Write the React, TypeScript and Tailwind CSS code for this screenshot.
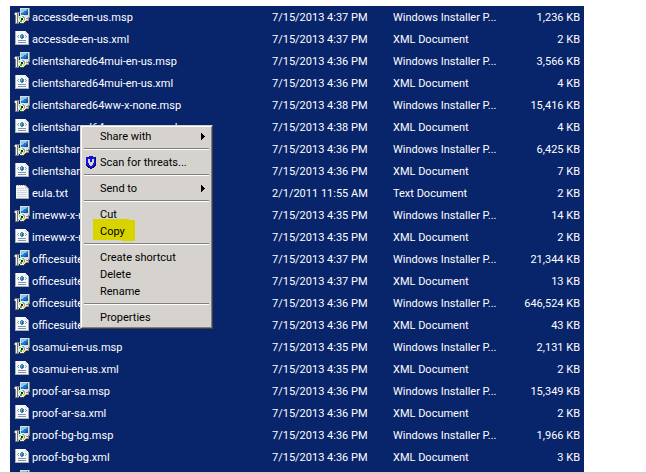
import React from "react";

type FileKind = "msp" | "xml" | "txt";

interface FileRow {
  name: string;
  date: string;
  size: string;
  kind: FileKind;
}

const TYPE_LABEL: Record<FileKind, string> = {
  msp: "Windows Installer P...",
  xml: "XML Document",
  txt: "Text Document",
};

const files: FileRow[] = [
  { name: "accessde-en-us.msp", date: "7/15/2013 4:37 PM", size: "1,236 KB", kind: "msp" },
  { name: "accessde-en-us.xml", date: "7/15/2013 4:37 PM", size: "2 KB", kind: "xml" },
  { name: "clientshared64mui-en-us.msp", date: "7/15/2013 4:36 PM", size: "3,566 KB", kind: "msp" },
  { name: "clientshared64mui-en-us.xml", date: "7/15/2013 4:36 PM", size: "4 KB", kind: "xml" },
  { name: "clientshared64ww-x-none.msp", date: "7/15/2013 4:38 PM", size: "15,416 KB", kind: "msp" },
  { name: "clientshared64ww-x-none.xml", date: "7/15/2013 4:38 PM", size: "4 KB", kind: "xml" },
  { name: "clientsharedmui-en-us.msp", date: "7/15/2013 4:36 PM", size: "6,425 KB", kind: "msp" },
  { name: "clientsharedmui-en-us.xml", date: "7/15/2013 4:36 PM", size: "7 KB", kind: "xml" },
  { name: "eula.txt", date: "2/1/2011 11:55 AM", size: "2 KB", kind: "txt" },
  { name: "imeww-x-none.msp", date: "7/15/2013 4:35 PM", size: "14 KB", kind: "msp" },
  { name: "imeww-x-none.xml", date: "7/15/2013 4:35 PM", size: "2 KB", kind: "xml" },
  { name: "officesuitemui-en-us.msp", date: "7/15/2013 4:37 PM", size: "21,344 KB", kind: "msp" },
  { name: "officesuitemui-en-us.xml", date: "7/15/2013 4:37 PM", size: "13 KB", kind: "xml" },
  { name: "officesuiteww-x-none.msp", date: "7/15/2013 4:36 PM", size: "646,524 KB", kind: "msp" },
  { name: "officesuiteww-x-none.xml", date: "7/15/2013 4:36 PM", size: "43 KB", kind: "xml" },
  { name: "osamui-en-us.msp", date: "7/15/2013 4:35 PM", size: "2,131 KB", kind: "msp" },
  { name: "osamui-en-us.xml", date: "7/15/2013 4:35 PM", size: "2 KB", kind: "xml" },
  { name: "proof-ar-sa.msp", date: "7/15/2013 4:36 PM", size: "15,349 KB", kind: "msp" },
  { name: "proof-ar-sa.xml", date: "7/15/2013 4:36 PM", size: "2 KB", kind: "xml" },
  { name: "proof-bg-bg.msp", date: "7/15/2013 4:36 PM", size: "1,966 KB", kind: "msp" },
  { name: "proof-bg-bg.xml", date: "7/15/2013 4:36 PM", size: "3 KB", kind: "xml" },
];

const InstallerIcon = () => (
  <svg viewBox="0 0 16 16" className="block w-4 h-4 shrink-0" shapeRendering="crispEdges" aria-hidden="true">
    {/* Monitor and base */}
    <path d="M6 0h10v10h-1v3h-4V9H6z" fill="#8b8c88" />
    <path d="M6 0h9v9H6z" fill="#dcdcd4" />
    <path d="M7 1h7v6H7z" fill="#1f78cc" />
    <path d="M7 1h6v1h-1v1h-2v1H9v1H7z" fill="#7fcbf5" />
    <path d="M12 4h2v3h-4V6h2z" fill="#0c55ad" />
    <path d="M11 9h3v1h-3zM11 11h3v1h-3z" fill="#e4e4dc" />
    {/* Box */}
    <path d="M0 5h1V4h5v1H5v11H1V7H0z" fill="#77787a" />
    <path d="M1 5h2v2H1zM2 7h1v8H2z" fill="#f4f4ee" />
    <path d="M4 5h1v10H4z" fill="#c7c8c2" />
    {/* Disc */}
    <path d="M7 7h3v1h1v1h1v4h-1v1h-1v1H6v-1H5v-1H4V9h1V8h2z" fill="#f0f2ee" />
    <path d="M8 8h2v1h1v1H9V9H8z" fill="#3fc6cf" />
    <path d="M5 9h2v1H6v1H5z" fill="#9bdd3c" />
    <path d="M9 12h2v1h-1v1H9z" fill="#f4d022" />
    <path d="M6 12h2v2H6z" fill="#2fae48" />
    <path d="M10 10h1v2h-1z" fill="#ef7a4c" />
    <path d="M7 10h2v2H7z" fill="#152a35" />
    <path d="M6 15h4v1H6zM10 14h1v1h-1zM11 13h1v1h-1z" fill="#3d4345" />
  </svg>
);

const XmlIcon = () => (
  <svg viewBox="0 0 16 16" className="block w-4 h-4 shrink-0" shapeRendering="crispEdges" aria-hidden="true">
    <path d="M1 1h11v1h1v1h1v1h1v11H1z" fill="#a9b0b8" />
    <path d="M2 1h9v3h3v10H2z" fill="#f7f9fb" />
    <path d="M11 1h1v1h1v1h1v1h-3z" fill="#dfe3e8" />
    <path d="M3 6h1v1H3zM4 5h1v1H4zM4 7h1v1H4zM12 6h1v1h-1zM11 5h1v1h-1zM11 7h1v1h-1z" fill="#93a0ac" />
    <path d="M7 4h2v1h1v3H9v1H7V8H6V5h1z" fill="#3c8bc0" />
    <path d="M7 5h1v2H7z" fill="#5db98c" />
    <path d="M8 6h1v2H8z" fill="#215d9c" />
    <path d="M4 10h8v1H4zM4 12h8v1H4z" fill="#8594aa" />
  </svg>
);

const TextIcon = () => (
  <svg viewBox="0 0 16 16" className="block w-4 h-4 shrink-0" shapeRendering="crispEdges" aria-hidden="true">
    <path d="M2 1h10v1h1v1h1v1h1v11H2z" fill="#a4a7ad" />
    <path d="M2 2h9v3h3v9H2z" fill="#f8f8f4" />
    <path d="M3 1h1v1H3zM5 1h1v1H5zM7 1h1v1H7zM9 1h1v1H9z" fill="#f8f8f4" />
    <path d="M11 2h1v1h1v1h1v1h-3z" fill="#d9dce0" />
    <path d="M3 4h7v1H3zM3 6h10v1H3zM3 8h10v1H3zM3 10h10v1H3zM3 12h10v1H3z" fill="#ccd5e2" />
  </svg>
);

const ICONS: Record<FileKind, React.FC> = {
  msp: InstallerIcon,
  xml: XmlIcon,
  txt: TextIcon,
};

const ShieldIcon = () => (
  <svg viewBox="0 0 10 13" className="w-[10px] h-[13px]" shapeRendering="crispEdges" aria-hidden="true">
    <path d="M0 1h3V0h4v1h3v9H9v1H8v1H6v1H4v-1H2v-1H1v-1H0z" fill="#0a0a6e" />
    <path d="M0 1h3V0h3v1h3v8H8v1H7v1H6v1H4v-1H3v-1H1V9H0z" fill="#1010e0" />
    <path d="M2 3h2v3h2V3h2v4H7v2H6v1H4V9H3V7H2z" fill="#d6d3ce" />
  </svg>
);

const ArrowIcon = () => (
  <svg viewBox="0 0 4 7" className="w-1 h-[7px]" shapeRendering="crispEdges" aria-hidden="true">
    <path d="M0 0h1v1h1v1h1v1h1v1H3v1H2v1H1v1H0z" fill="#000" />
  </svg>
);

// Marker stroke behind the Copy entry
const Highlight = () => (
  <svg
    viewBox="0 0 42 22"
    className="absolute -left-[7px] -top-[5px] -z-10 w-[42px] h-[22px]"
    shapeRendering="crispEdges"
    aria-hidden="true"
  >
    <path d="M0 0h36v1h6v21H28v-1H0z" fill="#d8d400" />
  </svg>
);

interface MenuItem {
  label: string;
  submenu?: boolean;
  shield?: boolean;
  marked?: boolean;
}

const menuGroups: MenuItem[][] = [
  [{ label: "Share with", submenu: true }],
  [{ label: "Scan for threats...", shield: true }],
  [{ label: "Send to", submenu: true }],
  [{ label: "Cut" }, { label: "Copy", marked: true }],
  [{ label: "Create shortcut" }, { label: "Delete" }, { label: "Rename" }],
  [{ label: "Properties" }],
];

const ContextMenu = () => (
  <div
    role="menu"
    className="absolute left-[80px] top-[125px] isolate w-[133px] border border-t-[#d6d3ce] border-l-[#d6d3ce] border-r-[#404040] border-b-[#404040] bg-[#d6d3ce] text-black"
  >
    <div className="border border-t-white border-l-white border-r-[#808080] border-b-[#808080] p-px">
      {menuGroups.map((group, g) => (
        <React.Fragment key={g}>
          {g > 0 && (
            <div role="separator" className="px-px pt-[3px] pb-1">
              <div className="h-[2px] border-t border-t-[#808080] border-b border-b-white" />
            </div>
          )}
          {group.map((item) => (
            <button key={item.label} type="button" role="menuitem" className="flex h-[17px] w-full items-center text-left">
              <span className="flex w-[17px] pl-[3px]">{item.shield && <ShieldIcon />}</span>
              <span className="relative flex-1 whitespace-nowrap">
                {item.marked && <Highlight />}
                {item.label}
              </span>
              {item.submenu && (
                <span className="pr-[5px]">
                  <ArrowIcon />
                </span>
              )}
            </button>
          ))}
        </React.Fragment>
      ))}
    </div>
  </div>
);

const App = () => {
  return (
    <main className="relative bg-white pt-[6px] font-['Roboto','Liberation_Sans',sans-serif] text-[11px] leading-4">
      <div className="ml-[10px] mr-[62px] bg-[#08246b] text-white">
        <table aria-label="Files" className="w-full table-fixed border-collapse">
          <colgroup>
            <col />
            <col className="w-[121px]" />
            <col className="w-[115px]" />
            <col className="w-[76px]" />
          </colgroup>
          <tbody className="leading-5">
            {files.map((file) => {
              const Icon = ICONS[file.kind];
              return (
                <tr key={file.name} className="align-top whitespace-nowrap">
                  <td className="p-0 pt-[2px] pl-1">
                    <div className="flex items-start gap-[2px]">
                      <Icon />
                      <span>{file.name}</span>
                    </div>
                  </td>
                  <td className="p-0 pt-[2px]">{file.date}</td>
                  <td className="p-0 pt-[2px]">{TYPE_LABEL[file.kind]}</td>
                  <td className="p-0 pt-[2px] pr-1 text-right">{file.size}</td>
                </tr>
              );
            })}
          </tbody>
        </table>
        {/* Next row, cut off by the bottom of the list */}
        <div className="h-[4px] overflow-hidden pl-1 pt-[2px]">
          <InstallerIcon />
        </div>
      </div>
      <div className="h-px bg-[#d0cfcc]" />
      <ContextMenu />
    </main>
  );
};

export default App;
